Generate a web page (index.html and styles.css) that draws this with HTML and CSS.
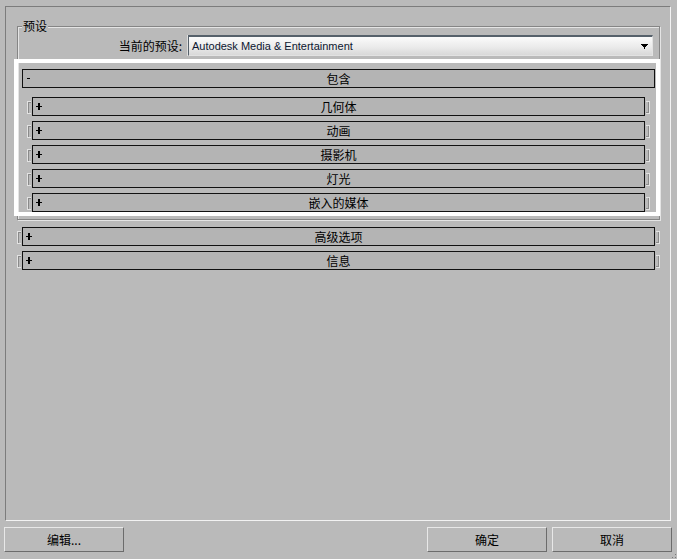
FILE: index.html
```html
<!DOCTYPE html>
<html lang="zh-CN">
<head>
  <meta charset="UTF-8" />
  <title>导出预设</title>
  <link rel="stylesheet" href="styles.css">
</head>
<body>
  <div class="panel">
    <div class="group">
      <span class="group-title">预设</span>
      <div class="preset-row">
        <label>当前的预设:</label>
        <div class="combo">
          <span class="combo-text">Autodesk Media &amp; Entertainment</span>
          <svg class="combo-arrow" width="7" height="5" viewBox="0 0 7 5"><path d="M0 0h7v1h-1v1h-1v1h-1v2h-1v-2h-1v-1h-1v-1h-1z" fill="#000"/></svg>
        </div>
      </div>
      <div class="highlight">
        <div class="bar bar-main">
          <span class="minus"></span>
          包含
        </div>
        <div class="sub-list">
          <div class="roll sub">
            <span class="bracket left"></span>
            <div class="bar"><svg class="plus" width="6" height="7" viewBox="0 0 6 7"><path d="M2 0h2v3h2v1h-2v3h-2v-3h-2v-1h2z" fill="#000"/></svg>几何体</div>
            <span class="bracket right"></span>
          </div>
          <div class="roll sub">
            <span class="bracket left"></span>
            <div class="bar"><svg class="plus" width="6" height="7" viewBox="0 0 6 7"><path d="M2 0h2v3h2v1h-2v3h-2v-3h-2v-1h2z" fill="#000"/></svg>动画</div>
            <span class="bracket right"></span>
          </div>
          <div class="roll sub">
            <span class="bracket left"></span>
            <div class="bar"><svg class="plus" width="6" height="7" viewBox="0 0 6 7"><path d="M2 0h2v3h2v1h-2v3h-2v-3h-2v-1h2z" fill="#000"/></svg>摄影机</div>
            <span class="bracket right"></span>
          </div>
          <div class="roll sub">
            <span class="bracket left"></span>
            <div class="bar"><svg class="plus" width="6" height="7" viewBox="0 0 6 7"><path d="M2 0h2v3h2v1h-2v3h-2v-3h-2v-1h2z" fill="#000"/></svg>灯光</div>
            <span class="bracket right"></span>
          </div>
          <div class="roll sub">
            <span class="bracket left"></span>
            <div class="bar"><svg class="plus" width="6" height="7" viewBox="0 0 6 7"><path d="M2 0h2v3h2v1h-2v3h-2v-3h-2v-1h2z" fill="#000"/></svg>嵌入的媒体</div>
            <span class="bracket right"></span>
          </div>
        </div>
      </div>
    </div>

    <div class="roll top first">
      <span class="bracket left"></span>
      <div class="bar"><svg class="plus" width="6" height="7" viewBox="0 0 6 7"><path d="M2 0h2v3h2v1h-2v3h-2v-3h-2v-1h2z" fill="#000"/></svg>高级选项</div>
      <span class="bracket right"></span>
    </div>
    <div class="roll top">
      <span class="bracket left"></span>
      <div class="bar"><svg class="plus" width="6" height="7" viewBox="0 0 6 7"><path d="M2 0h2v3h2v1h-2v3h-2v-3h-2v-1h2z" fill="#000"/></svg>信息</div>
      <span class="bracket right"></span>
    </div>
  </div>

  <div class="footer">
    <button class="btn">编辑...</button>
    <button class="btn ok">确定</button>
    <button class="btn">取消</button>
  </div>

  <svg class="grip" width="5" height="5" viewBox="0 0 5 5">
    <rect x="3" y="0" width="1" height="1" fill="#7a7a7a"/>
    <rect x="3" y="3" width="1" height="1" fill="#7a7a7a"/>
    <rect x="0" y="3" width="1" height="1" fill="#7a7a7a"/>
  </svg>
</body>
</html>
```

FILE: styles.css
```css
html, body {
  height: 559px;
  overflow: hidden;
}
body {
  margin: 0;
  background: #bababa;
  font-family: "Noto Sans CJK SC", "Liberation Sans", sans-serif;
  font-size: 12px;
  color: #000;
  position: relative;
}
.panel {
  margin: 6px 0 0 5px;
  width: 666px;
  height: 515px;
  box-sizing: border-box;
  border: 1px solid;
  border-color: #7c7c7c #f2f2f2 #f2f2f2 #7c7c7c;
}
.group {
  position: relative;
  margin: 19px 0 0 11px;
  width: 643px;
  height: 194px;
  box-sizing: border-box;
  border: 1px solid #858585;
  box-shadow: 1px 1px 0 #e4e4e4, inset 1px 1px 0 #e4e4e4;
}
.group-title {
  position: absolute;
  top: -8px;
  left: 4px;
  padding: 0 1px;
  line-height: 14px;
  background: #bababa;
}
.preset-row {
  display: flex;
  justify-content: flex-end;
  align-items: center;
  gap: 6px;
  padding: 8px 6px 0 0;
}
.preset-row label {
  line-height: 21px;
}
.combo {
  width: 465px;
  height: 21px;
  box-sizing: border-box;
  display: flex;
  align-items: center;
  padding-left: 3px;
  border: 1px solid;
  border-color: #56616b #e2e2e2 #e2e2e2 #56616b;
  border-top-width: 2px;
  box-shadow: -1px 0 0 #dedede;
  background: linear-gradient(#fbfbfb, #e9e9e9 60%, #d8d8d8);
}
.combo-text {
  font-family: "Liberation Sans", "DejaVu Sans", sans-serif;
  font-size: 11px;
  color: #0c1630;
}
.combo-arrow {
  margin-left: auto;
  margin-right: 4px;
}
.highlight {
  margin: 3px 0 0 -4px;
  width: 646px;
  height: 157px;
  box-sizing: border-box;
  border: 4px solid #fff;
}
.bar {
  position: relative;
  height: 19px;
  box-sizing: border-box;
  border: 1px solid #111;
  background: #b4b4b4;
  text-align: center;
  line-height: 17px;
}
.bar-main {
  margin: 6px 0 0 4px;
  width: 633px;
}
.minus {
  position: absolute;
  left: 4px;
  top: 8px;
  width: 3px;
  height: 1px;
  background: #000;
}
.plus {
  position: absolute;
  left: 3px;
  top: 5px;
}
.sub-list {
  margin-top: 9px;
  padding-left: 9px;
  display: flex;
  flex-direction: column;
  gap: 5px;
}
.roll {
  display: flex;
  gap: 1px;
}
.roll .bar {
  flex: 1;
}
.roll.sub {
  width: 623px;
}
.roll.top {
  width: 643px;
  margin: 5px 0 0 11px;
}
.roll.top.first {
  margin-top: 7px;
}
.bracket {
  width: 4px;
  height: 13px;
  margin-top: 4px;
  box-sizing: border-box;
  border: 1px solid #e2e2e2;
}
.bracket.left {
  border-right: none;
  box-shadow: inset 1px 1px 0 #8a8a8a;
}
.bracket.right {
  border-left: none;
  box-shadow: inset -1px -1px 0 #8a8a8a;
}
.footer {
  display: flex;
  gap: 5px;
  margin-top: 6px;
  padding: 0 5px 0 4px;
}
.btn {
  width: 120px;
  height: 25px;
  box-sizing: border-box;
  border: 1px solid;
  border-color: #e8e8e8 #6c6c6c #6c6c6c #e8e8e8;
  background: #bababa;
  font-family: "Noto Sans CJK SC", "Liberation Sans", sans-serif;
  font-size: 12px;
  color: #000;
  padding: 0;
}
.btn.ok {
  margin-left: auto;
}
.grip {
  position: absolute;
  right: 0;
  bottom: 0;
}
```
